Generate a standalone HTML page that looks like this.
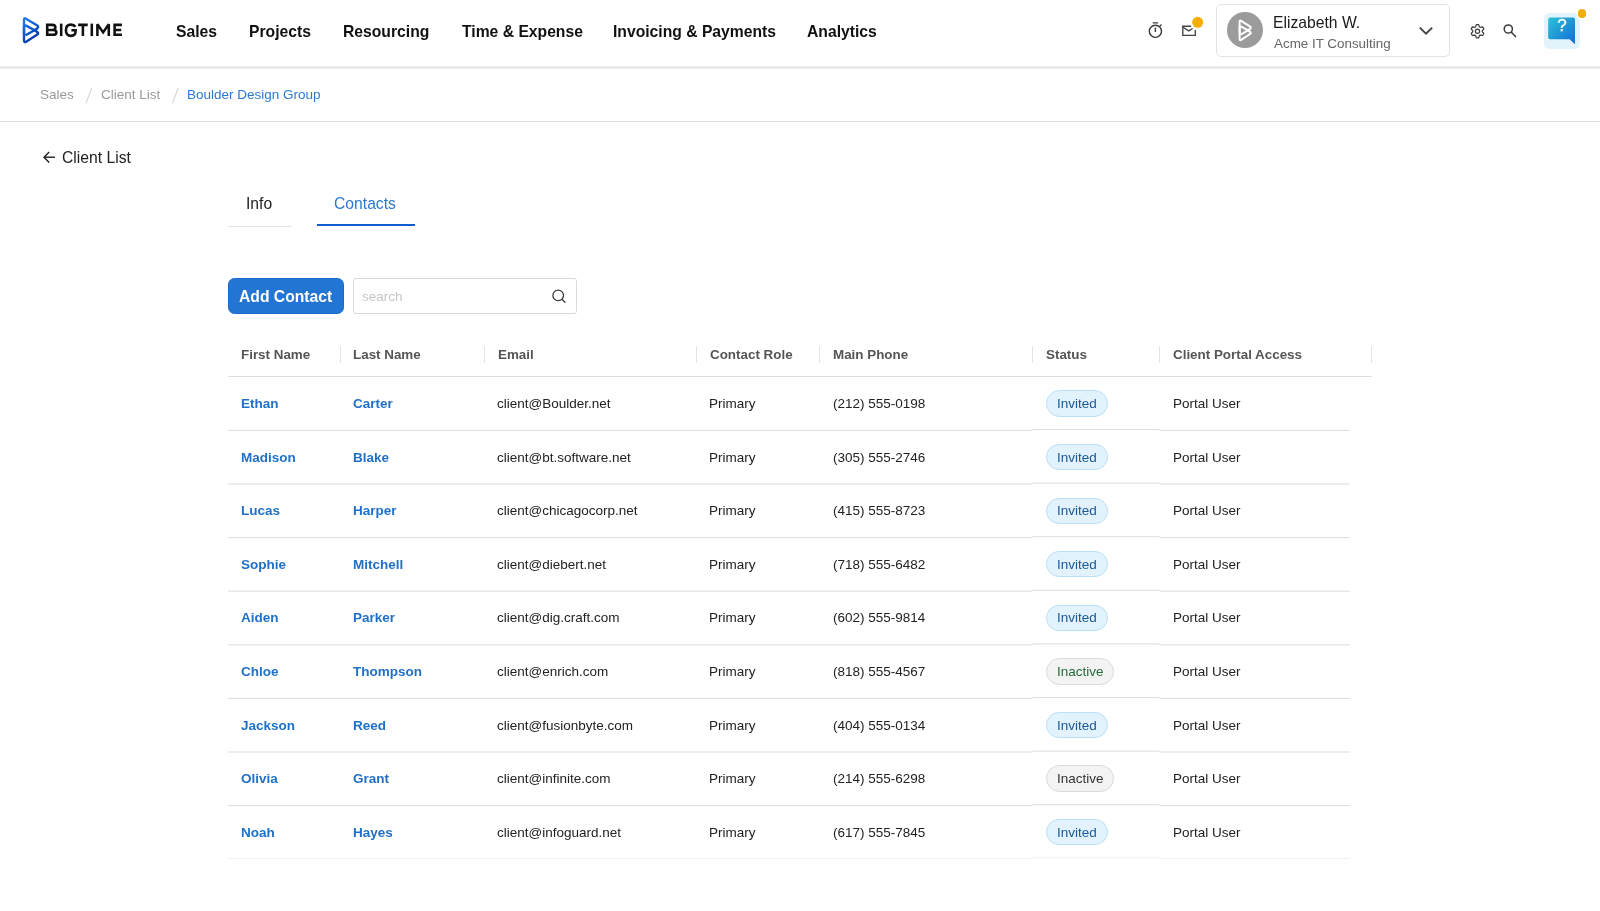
<!DOCTYPE html>
<html><head><meta charset="utf-8"><title>BigTime - Contacts</title>
<style>
html,body{margin:0;padding:0;background:#fff;}
body{width:1600px;height:911px;position:relative;overflow:hidden;font-family:"Liberation Sans",sans-serif;}
.t{position:absolute;white-space:nowrap;line-height:20px;will-change:transform;}
</style></head><body>
<div style="position:absolute;left:0;top:66px;width:1600px;height:1px;background:#f1f1f1"></div>
<div style="position:absolute;left:0;top:67px;width:1600px;height:1px;background:#e2e2e2"></div>
<div style="position:absolute;left:0;top:68px;width:1600px;height:1px;background:#f1f1f1"></div>
<svg style="position:absolute;left:18px;top:14px" width="30" height="32" viewBox="18 14 30 32">
<defs><linearGradient id="lg" gradientUnits="userSpaceOnUse" x1="23" y1="19" x2="39" y2="38"><stop offset="0" stop-color="#2080ec"/><stop offset="0.5" stop-color="#0d5ad0"/><stop offset="1" stop-color="#0030a2"/></linearGradient></defs>
<g fill="none" stroke="url(#lg)" stroke-width="2.4" stroke-linejoin="round" stroke-linecap="round">
<path d="M24 34.4 V19.9 Q24 17.5 26 18.7 L36.9 25.3 Q39 26.6 37.4 28.2 L34.6 30.3 L26.3 34.8"/><path d="M24 40.4 V27 Q24 24.7 26.1 25.6 L34.6 30.3 L37.2 32 Q39 33.3 37.3 34.6 L26.1 41.7 Q24 42.9 24 40.6 Z"/>
</g></svg>
<svg style="position:absolute;left:44px;top:20px" width="82" height="20" viewBox="44 20 82 20">
<g fill="none" stroke="#111" stroke-width="2.55" stroke-linejoin="miter" stroke-miterlimit="2">
<path d="M47.2 23.6 V36.1 M47.2 24.88 H52.3 Q55.4 24.88 55.4 27.4 Q55.4 29.9 52.4 29.9 H47.2 M47.2 29.9 H52.9 Q56.4 29.9 56.4 32.4 Q56.4 34.83 52.9 34.83 H47.2"/>
<path d="M61.2 23.6 V36.1"/>
<path d="M75.5 26.7 Q74 24.6 70.9 24.6 Q65.9 24.6 65.9 30.3 Q65.9 35.85 70.9 35.85 Q75.6 35.85 75.6 31.3 V30.2 H71.4"/>
<path d="M78.1 24.88 H87.7 M82.9 23.6 V36.1"/>
<path d="M91.8 23.6 V36.1"/>
<path d="M97.4 36.1 V24.3 L103.1 32.4 L108.8 24.3 V36.1"/>
<path d="M114.6 23.6 V36.1 M113.4 24.88 H121.9 M114.6 34.83 H121.9 M114.6 29.9 H121.2"/>
</g></svg>
<div class="t" style="left:176.05px;top:22px;font-size:15.7px;font-weight:700;color:#111;">Sales</div>
<div class="t" style="left:248.95px;top:22px;font-size:15.7px;font-weight:700;color:#111;">Projects</div>
<div class="t" style="left:342.70px;top:22px;font-size:15.7px;font-weight:700;color:#111;">Resourcing</div>
<div class="t" style="left:462.07px;top:22px;font-size:15.7px;font-weight:700;color:#111;">Time &amp; Expense</div>
<div class="t" style="left:612.95px;top:22px;font-size:15.7px;font-weight:700;color:#111;">Invoicing &amp; Payments</div>
<div class="t" style="left:807.41px;top:22px;font-size:15.7px;font-weight:700;color:#111;">Analytics</div>
<svg style="position:absolute;left:1144px;top:18px" width="24" height="24" viewBox="1144 18 24 24">
<g fill="none" stroke="#3a3a3a" stroke-width="1.4" stroke-linecap="round">
<circle cx="1155.4" cy="31.3" r="6.1"/>
<path d="M1153.3 22.9 H1157.6"/><path d="M1155.4 28.3 V31.4"/><path d="M1160.2 25.8 L1161 25"/>
</g></svg>
<svg style="position:absolute;left:1178px;top:14px" width="28" height="26" viewBox="1178 14 28 26">
<g fill="none" stroke="#444" stroke-width="1.35" stroke-linejoin="miter">
<path d="M1191.2 26.2 H1182.8 V35.4 H1195.3 V30"/>
<path d="M1183 27.3 L1188.8 30.9 L1192.6 28.5"/>
</g>
<circle cx="1197.7" cy="22.3" r="7" fill="#fff"/>
<circle cx="1197.7" cy="22.3" r="5.5" fill="#f3ae00"/>
</svg>
<div style="position:absolute;left:1216px;top:4px;width:232px;height:51px;border:1px solid #e2e2e2;border-radius:5px;background:#fff"></div>
<div style="position:absolute;left:1227px;top:12.2px;width:36px;height:36px;border-radius:50%;background:#9b9b9b"></div>
<svg style="position:absolute;left:1227px;top:12px" width="36" height="36" viewBox="1227 12 36 36">
<g transform="translate(1220.557,5.508) scale(0.7939,0.8231)">
<g fill="none" stroke="#fff" stroke-width="2.5" stroke-linejoin="round" stroke-linecap="round">
<path d="M24 34.4 V19.9 Q24 17.5 26 18.7 L36.9 25.3 Q39 26.6 37.4 28.2 L34.6 30.3 L26.3 34.8"/><path d="M24 40.4 V27 Q24 24.7 26.1 25.6 L34.6 30.3 L37.2 32 Q39 33.3 37.3 34.6 L26.1 41.7 Q24 42.9 24 40.6 Z"/>
</g></g></svg>
<div class="t" style="left:1273.41px;top:13px;font-size:15.7px;font-weight:400;color:#1a1a1a;">Elizabeth W.</div>
<div class="t" style="left:1274.27px;top:34px;font-size:13.4px;font-weight:400;color:#666;">Acme IT Consulting</div>
<svg style="position:absolute;left:1414px;top:22px" width="24" height="16" viewBox="1414 22 24 16">
<path d="M1419.8 27.6 L1426 33.6 L1432.2 27.6" fill="none" stroke="#444" stroke-width="1.9"/></svg>
<svg style="position:absolute;left:1466px;top:20px" width="24" height="24" viewBox="1466 20 24 24">
<g fill="none" stroke="#3c3c3c" stroke-width="1.2" stroke-linejoin="round">
<path d="M1475.51 26.94 L1476.34 24.60 L1478.66 24.60 L1479.49 26.94 L1480.20 27.35 L1482.63 26.89 L1483.80 28.91 L1482.18 30.79 L1482.18 31.61 L1483.80 33.49 L1482.63 35.51 L1480.20 35.05 L1479.49 35.46 L1478.66 37.80 L1476.34 37.80 L1475.51 35.46 L1474.80 35.05 L1472.37 35.51 L1471.20 33.49 L1472.82 31.61 L1472.82 30.79 L1471.20 28.91 L1472.37 26.89 L1474.80 27.35Z"/><circle cx="1477.5" cy="31.2" r="2.1"/></g></svg>
<svg style="position:absolute;left:1498px;top:20px" width="24" height="22" viewBox="1498 20 24 22">
<g fill="none" stroke="#3a3a3a" stroke-width="1.5" stroke-linecap="round">
<circle cx="1508.3" cy="29" r="4.1"/><path d="M1511.4 32.2 L1515.5 36.6"/></g></svg>
<div style="position:absolute;left:1544px;top:13px;width:36px;height:36px;border-radius:5px;background:#e2f3fc"></div>
<svg style="position:absolute;left:1544px;top:13px" width="36" height="36" viewBox="1544 13 36 36">
<defs><linearGradient id="hg" x1="0" y1="0" x2="1" y2="1"><stop offset="0" stop-color="#2ac3d6"/><stop offset="1" stop-color="#1569d6"/></linearGradient></defs>
<path d="M1550.2 17.6 H1573 Q1575 17.6 1575 19.6 V44.3 L1569.6 39.3 H1550.2 Q1548.2 39.3 1548.2 37.3 V19.6 Q1548.2 17.6 1550.2 17.6 Z" fill="url(#hg)"/>
</svg>
<div class="t" style="left:1555.6px;top:16.4px;width:12px;text-align:center;font-size:17px;font-weight:400;line-height:20px;color:#fff;-webkit-text-stroke:0.35px #fff">?</div>
<div style="position:absolute;left:1577.6px;top:8.9px;width:8.8px;height:8.8px;border-radius:50%;background:#f3ae00;box-shadow:0 0 0 1.5px #fff"></div>
<div class="t" style="left:39.99px;top:85px;font-size:13.5px;font-weight:400;color:#9a9a9a;">Sales</div>
<svg style="position:absolute;left:80px;top:84px" width="110" height="24" viewBox="80 84 110 24"><g stroke="#d4d4d4" stroke-width="1.1"><path d="M91.8 87.8 L86 103.2"/><path d="M178.3 87.8 L172.5 103.2"/></g></svg>
<div class="t" style="left:100.91px;top:85px;font-size:13.5px;font-weight:400;color:#9a9a9a;">Client List</div>
<div class="t" style="left:187.39px;top:85px;font-size:13.5px;font-weight:400;color:#2a7ad4;">Boulder Design Group</div>
<div style="position:absolute;left:0;top:121px;width:1600px;height:1px;background:#dcdcdc"></div>
<svg style="position:absolute;left:40px;top:148px" width="20" height="18" viewBox="40 148 20 18">
<g fill="none" stroke="#222" stroke-width="1.4" stroke-linecap="butt" stroke-linejoin="miter">
<path d="M55 157.2 H44.5"/><path d="M49.2 151.9 L44 157.2 L49.2 162.5"/></g></svg>
<div class="t" style="left:62.10px;top:148px;font-size:15.7px;font-weight:400;color:#222;">Client List</div>
<div class="t" style="left:245.95px;top:194px;font-size:15.7px;font-weight:400;color:#222;">Info</div>
<div class="t" style="left:334.00px;top:194px;font-size:15.7px;font-weight:400;color:#2a78d2;">Contacts</div>
<div style="position:absolute;left:228px;top:225.5px;width:62.5px;height:1.5px;background:#e2e2e2"></div>
<div style="position:absolute;left:316.5px;top:224px;width:98.5px;height:2px;background:#0f5fce"></div>
<div style="position:absolute;left:228px;top:278px;width:114px;height:33.5px;border:1px solid #1a6bcd;border-radius:6.5px;background:#2275d2"></div>
<div class="t" style="left:239.11px;top:287px;font-size:15.7px;font-weight:700;color:#fff;">Add Contact</div>
<div style="position:absolute;left:353px;top:278px;width:222px;height:34px;border:1px solid #d9d9d9;border-radius:3px"></div>
<div class="t" style="left:362.32px;top:287px;font-size:13.5px;font-weight:400;color:#c6c6c6;">search</div>
<svg style="position:absolute;left:546px;top:284px" width="24" height="24" viewBox="546 284 24 24">
<g fill="none" stroke="#3a3a3a" stroke-width="1.3" stroke-linecap="round">
<circle cx="558.2" cy="295.4" r="5.3"/><path d="M562 299.4 L565 302.2"/></g></svg>
<div class="t" style="left:241.25px;top:345px;font-size:13.4px;font-weight:700;color:#555;">First Name</div>
<div class="t" style="left:353.10px;top:345px;font-size:13.4px;font-weight:700;color:#555;">Last Name</div>
<div class="t" style="left:497.55px;top:345px;font-size:13.4px;font-weight:700;color:#555;">Email</div>
<div class="t" style="left:710.05px;top:345px;font-size:13.4px;font-weight:700;color:#555;">Contact Role</div>
<div class="t" style="left:832.55px;top:345px;font-size:13.4px;font-weight:700;color:#555;">Main Phone</div>
<div class="t" style="left:1045.71px;top:345px;font-size:13.4px;font-weight:700;color:#555;">Status</div>
<div class="t" style="left:1172.85px;top:345px;font-size:13.4px;font-weight:700;color:#555;">Client Portal Access</div>
<div style="position:absolute;left:339.5px;top:345.5px;width:1px;height:17.5px;background:#e4e4e4"></div>
<div style="position:absolute;left:484.0px;top:345.5px;width:1px;height:17.5px;background:#e4e4e4"></div>
<div style="position:absolute;left:696.0px;top:345.5px;width:1px;height:17.5px;background:#e4e4e4"></div>
<div style="position:absolute;left:819.0px;top:345.5px;width:1px;height:17.5px;background:#e4e4e4"></div>
<div style="position:absolute;left:1032.0px;top:345.5px;width:1px;height:17.5px;background:#e4e4e4"></div>
<div style="position:absolute;left:1159.0px;top:345.5px;width:1px;height:17.5px;background:#e4e4e4"></div>
<div style="position:absolute;left:1371.0px;top:345.5px;width:1px;height:17.5px;background:#e4e4e4"></div>
<div style="position:absolute;left:228px;top:376px;width:1144px;height:1px;background:#dedede"></div>
<div class="t" style="left:241.20px;top:394px;font-size:13.5px;font-weight:700;color:#1f70c8;">Ethan</div>
<div class="t" style="left:353.00px;top:394px;font-size:13.5px;font-weight:700;color:#1f70c8;">Carter</div>
<div class="t" style="left:497.40px;top:394px;font-size:13.5px;font-weight:400;color:#222;">client@Boulder.net</div>
<div class="t" style="left:709.40px;top:394px;font-size:13.5px;font-weight:400;color:#222;">Primary</div>
<div class="t" style="left:832.70px;top:394px;font-size:13.5px;font-weight:400;color:#222;">(212) 555-0198</div>
<div class="t" style="left:1172.50px;top:394px;font-size:13.5px;font-weight:400;color:#222;">Portal User</div>
<div style="position:absolute;left:1046px;top:390.30px;width:60.3px;height:24.3px;border:1px solid #b9e0f7;border-radius:14px;background:#e2f3fd"></div>
<div class="t" style="left:1056.50px;top:394px;font-size:13.5px;font-weight:400;color:#1a5898;">Invited</div>
<div class="t" style="left:241.20px;top:448px;font-size:13.5px;font-weight:700;color:#1f70c8;">Madison</div>
<div class="t" style="left:353.00px;top:448px;font-size:13.5px;font-weight:700;color:#1f70c8;">Blake</div>
<div class="t" style="left:497.40px;top:448px;font-size:13.5px;font-weight:400;color:#222;">client@bt.software.net</div>
<div class="t" style="left:709.40px;top:448px;font-size:13.5px;font-weight:400;color:#222;">Primary</div>
<div class="t" style="left:832.70px;top:448px;font-size:13.5px;font-weight:400;color:#222;">(305) 555-2746</div>
<div class="t" style="left:1172.50px;top:448px;font-size:13.5px;font-weight:400;color:#222;">Portal User</div>
<div style="position:absolute;left:1046px;top:443.90px;width:60.3px;height:24.3px;border:1px solid #b9e0f7;border-radius:14px;background:#e2f3fd"></div>
<div class="t" style="left:1056.50px;top:448px;font-size:13.5px;font-weight:400;color:#1a5898;">Invited</div>
<div class="t" style="left:241.20px;top:501px;font-size:13.5px;font-weight:700;color:#1f70c8;">Lucas</div>
<div class="t" style="left:353.00px;top:501px;font-size:13.5px;font-weight:700;color:#1f70c8;">Harper</div>
<div class="t" style="left:497.40px;top:501px;font-size:13.5px;font-weight:400;color:#222;">client@chicagocorp.net</div>
<div class="t" style="left:709.40px;top:501px;font-size:13.5px;font-weight:400;color:#222;">Primary</div>
<div class="t" style="left:832.70px;top:501px;font-size:13.5px;font-weight:400;color:#222;">(415) 555-8723</div>
<div class="t" style="left:1172.50px;top:501px;font-size:13.5px;font-weight:400;color:#222;">Portal User</div>
<div style="position:absolute;left:1046px;top:497.50px;width:60.3px;height:24.3px;border:1px solid #b9e0f7;border-radius:14px;background:#e2f3fd"></div>
<div class="t" style="left:1056.50px;top:501px;font-size:13.5px;font-weight:400;color:#1a5898;">Invited</div>
<div class="t" style="left:241.20px;top:555px;font-size:13.5px;font-weight:700;color:#1f70c8;">Sophie</div>
<div class="t" style="left:353.00px;top:555px;font-size:13.5px;font-weight:700;color:#1f70c8;">Mitchell</div>
<div class="t" style="left:497.40px;top:555px;font-size:13.5px;font-weight:400;color:#222;">client@diebert.net</div>
<div class="t" style="left:709.40px;top:555px;font-size:13.5px;font-weight:400;color:#222;">Primary</div>
<div class="t" style="left:832.70px;top:555px;font-size:13.5px;font-weight:400;color:#222;">(718) 555-6482</div>
<div class="t" style="left:1172.50px;top:555px;font-size:13.5px;font-weight:400;color:#222;">Portal User</div>
<div style="position:absolute;left:1046px;top:551.10px;width:60.3px;height:24.3px;border:1px solid #b9e0f7;border-radius:14px;background:#e2f3fd"></div>
<div class="t" style="left:1056.50px;top:555px;font-size:13.5px;font-weight:400;color:#1a5898;">Invited</div>
<div class="t" style="left:241.20px;top:608px;font-size:13.5px;font-weight:700;color:#1f70c8;">Aiden</div>
<div class="t" style="left:353.00px;top:608px;font-size:13.5px;font-weight:700;color:#1f70c8;">Parker</div>
<div class="t" style="left:497.40px;top:608px;font-size:13.5px;font-weight:400;color:#222;">client@dig.craft.com</div>
<div class="t" style="left:709.40px;top:608px;font-size:13.5px;font-weight:400;color:#222;">Primary</div>
<div class="t" style="left:832.70px;top:608px;font-size:13.5px;font-weight:400;color:#222;">(602) 555-9814</div>
<div class="t" style="left:1172.50px;top:608px;font-size:13.5px;font-weight:400;color:#222;">Portal User</div>
<div style="position:absolute;left:1046px;top:604.70px;width:60.3px;height:24.3px;border:1px solid #b9e0f7;border-radius:14px;background:#e2f3fd"></div>
<div class="t" style="left:1056.50px;top:608px;font-size:13.5px;font-weight:400;color:#1a5898;">Invited</div>
<div class="t" style="left:241.20px;top:662px;font-size:13.5px;font-weight:700;color:#1f70c8;">Chloe</div>
<div class="t" style="left:353.00px;top:662px;font-size:13.5px;font-weight:700;color:#1f70c8;">Thompson</div>
<div class="t" style="left:497.40px;top:662px;font-size:13.5px;font-weight:400;color:#222;">client@enrich.com</div>
<div class="t" style="left:709.40px;top:662px;font-size:13.5px;font-weight:400;color:#222;">Primary</div>
<div class="t" style="left:832.70px;top:662px;font-size:13.5px;font-weight:400;color:#222;">(818) 555-4567</div>
<div class="t" style="left:1172.50px;top:662px;font-size:13.5px;font-weight:400;color:#222;">Portal User</div>
<div style="position:absolute;left:1046.2px;top:658.20px;width:66.3px;height:24.4px;border:1px solid #dadada;border-radius:14px;background:#f3f3f3"></div>
<div class="t" style="left:1056.50px;top:662px;font-size:13.5px;font-weight:400;color:#226a37;">Inactive</div>
<div class="t" style="left:241.20px;top:716px;font-size:13.5px;font-weight:700;color:#1f70c8;">Jackson</div>
<div class="t" style="left:353.00px;top:716px;font-size:13.5px;font-weight:700;color:#1f70c8;">Reed</div>
<div class="t" style="left:497.40px;top:716px;font-size:13.5px;font-weight:400;color:#222;">client@fusionbyte.com</div>
<div class="t" style="left:709.40px;top:716px;font-size:13.5px;font-weight:400;color:#222;">Primary</div>
<div class="t" style="left:832.70px;top:716px;font-size:13.5px;font-weight:400;color:#222;">(404) 555-0134</div>
<div class="t" style="left:1172.50px;top:716px;font-size:13.5px;font-weight:400;color:#222;">Portal User</div>
<div style="position:absolute;left:1046px;top:711.90px;width:60.3px;height:24.3px;border:1px solid #b9e0f7;border-radius:14px;background:#e2f3fd"></div>
<div class="t" style="left:1056.50px;top:716px;font-size:13.5px;font-weight:400;color:#1a5898;">Invited</div>
<div class="t" style="left:241.20px;top:769px;font-size:13.5px;font-weight:700;color:#1f70c8;">Olivia</div>
<div class="t" style="left:353.00px;top:769px;font-size:13.5px;font-weight:700;color:#1f70c8;">Grant</div>
<div class="t" style="left:497.40px;top:769px;font-size:13.5px;font-weight:400;color:#222;">client@infinite.com</div>
<div class="t" style="left:709.40px;top:769px;font-size:13.5px;font-weight:400;color:#222;">Primary</div>
<div class="t" style="left:832.70px;top:769px;font-size:13.5px;font-weight:400;color:#222;">(214) 555-6298</div>
<div class="t" style="left:1172.50px;top:769px;font-size:13.5px;font-weight:400;color:#222;">Portal User</div>
<div style="position:absolute;left:1046.2px;top:765.40px;width:66.3px;height:24.4px;border:1px solid #dadada;border-radius:14px;background:#f3f3f3"></div>
<div class="t" style="left:1056.50px;top:769px;font-size:13.5px;font-weight:400;color:#333;">Inactive</div>
<div class="t" style="left:241.20px;top:823px;font-size:13.5px;font-weight:700;color:#1f70c8;">Noah</div>
<div class="t" style="left:353.00px;top:823px;font-size:13.5px;font-weight:700;color:#1f70c8;">Hayes</div>
<div class="t" style="left:497.40px;top:823px;font-size:13.5px;font-weight:400;color:#222;">client@infoguard.net</div>
<div class="t" style="left:709.40px;top:823px;font-size:13.5px;font-weight:400;color:#222;">Primary</div>
<div class="t" style="left:832.70px;top:823px;font-size:13.5px;font-weight:400;color:#222;">(617) 555-7845</div>
<div class="t" style="left:1172.50px;top:823px;font-size:13.5px;font-weight:400;color:#222;">Portal User</div>
<div style="position:absolute;left:1046px;top:819.10px;width:60.3px;height:24.3px;border:1px solid #b9e0f7;border-radius:14px;background:#e2f3fd"></div>
<div class="t" style="left:1056.50px;top:823px;font-size:13.5px;font-weight:400;color:#1a5898;">Invited</div>
<svg style="position:absolute;left:0;top:0" width="1600" height="911" viewBox="0 0 1600 911"><rect x="228" y="429.90" width="804.5" height="1" fill="#dcdcdc"/><rect x="1032.5" y="429.00" width="127" height="1" fill="#dcdcdc"/><rect x="1159.5" y="429.90" width="190.5" height="1" fill="#dcdcdc"/><rect x="228" y="483.50" width="804.5" height="1" fill="#dcdcdc"/><rect x="1032.5" y="482.60" width="127" height="1" fill="#dcdcdc"/><rect x="1159.5" y="483.50" width="190.5" height="1" fill="#dcdcdc"/><rect x="228" y="537.10" width="804.5" height="1" fill="#dcdcdc"/><rect x="1032.5" y="536.20" width="127" height="1" fill="#dcdcdc"/><rect x="1159.5" y="537.10" width="190.5" height="1" fill="#dcdcdc"/><rect x="228" y="590.70" width="804.5" height="1" fill="#dcdcdc"/><rect x="1032.5" y="589.80" width="127" height="1" fill="#dcdcdc"/><rect x="1159.5" y="590.70" width="190.5" height="1" fill="#dcdcdc"/><rect x="228" y="644.30" width="804.5" height="1" fill="#dcdcdc"/><rect x="1032.5" y="643.40" width="127" height="1" fill="#dcdcdc"/><rect x="1159.5" y="644.30" width="190.5" height="1" fill="#dcdcdc"/><rect x="228" y="697.90" width="804.5" height="1" fill="#dcdcdc"/><rect x="1032.5" y="697.00" width="127" height="1" fill="#dcdcdc"/><rect x="1159.5" y="697.90" width="190.5" height="1" fill="#dcdcdc"/><rect x="228" y="751.50" width="804.5" height="1" fill="#dcdcdc"/><rect x="1032.5" y="750.60" width="127" height="1" fill="#dcdcdc"/><rect x="1159.5" y="751.50" width="190.5" height="1" fill="#dcdcdc"/><rect x="228" y="805.10" width="804.5" height="1" fill="#dcdcdc"/><rect x="1032.5" y="804.20" width="127" height="1" fill="#dcdcdc"/><rect x="1159.5" y="805.10" width="190.5" height="1" fill="#dcdcdc"/><rect x="228" y="858.00" width="804.5" height="1" fill="#f1f1f1"/><rect x="1032.5" y="857.10" width="127" height="1" fill="#f1f1f1"/><rect x="1159.5" y="858.00" width="190.5" height="1" fill="#f1f1f1"/></svg>
</body></html>
